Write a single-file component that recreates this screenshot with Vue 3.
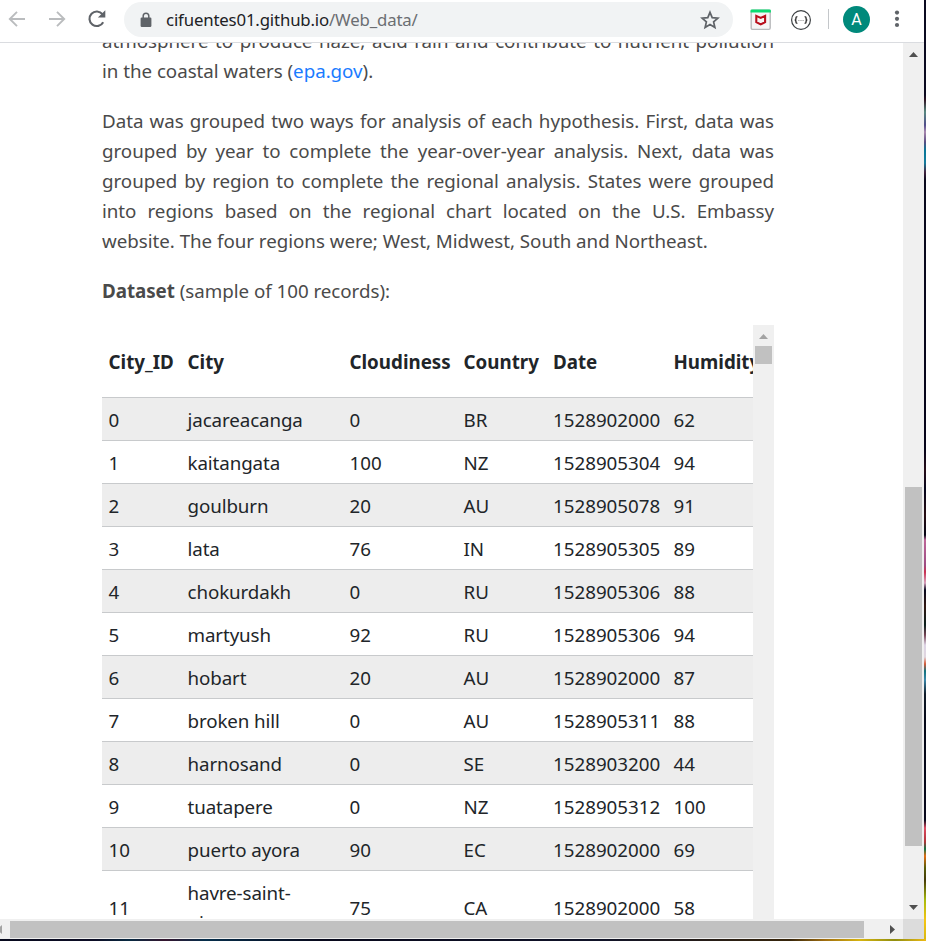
<script setup>
const columns = ['City_ID', 'City', 'Cloudiness', 'Country', 'Date', 'Humidity']
const rows = [
  ['0', 'jacareacanga', '0', 'BR', '1528902000', '62'],
  ['1', 'kaitangata', '100', 'NZ', '1528905304', '94'],
  ['2', 'goulburn', '20', 'AU', '1528905078', '91'],
  ['3', 'lata', '76', 'IN', '1528905305', '89'],
  ['4', 'chokurdakh', '0', 'RU', '1528905306', '88'],
  ['5', 'martyush', '92', 'RU', '1528905306', '94'],
  ['6', 'hobart', '20', 'AU', '1528902000', '87'],
  ['7', 'broken hill', '0', 'AU', '1528905311', '88'],
  ['8', 'harnosand', '0', 'SE', '1528903200', '44'],
  ['9', 'tuatapere', '0', 'NZ', '1528905312', '100'],
  ['10', 'puerto ayora', '90', 'EC', '1528902000', '69'],
  ['11', 'havre-saint-pierre', '75', 'CA', '1528902000', '58'],
]
</script>

<template>
  <div class="desktop">
    <div class="window">
      <header class="toolbar">
        <svg class="nav" width="18" height="18" viewBox="0 0 18 18"><path d="M17 9H2M9 1.8L1.8 9L9 16.2" fill="none" stroke="#babcbe" stroke-width="1.9" /></svg>
        <svg class="nav forward" width="18" height="18" viewBox="0 0 18 18"><path d="M1 9H16M9 1.8L16.2 9L9 16.2" fill="none" stroke="#babcbe" stroke-width="1.9" /></svg>
        <svg class="reload" width="20" height="20" viewBox="0 0 20 20"><path d="M16.2 13.2A7.3 7.3 0 1 1 15.5 5.2" fill="none" stroke="#5f6368" stroke-width="2.1" /><path d="M18.3 1.2V8.6H10.9Z" fill="#5f6368" /></svg>
        <div class="address">
          <svg class="lock" width="12" height="16" viewBox="0 0 12 16"><rect x="0.6" y="5.6" width="10.8" height="9.4" rx="1.2" fill="#5f6368" /><path d="M3.2 6V4.1a2.8 2.8 0 0 1 5.6 0V6" fill="none" stroke="#5f6368" stroke-width="1.5" /></svg>
          <span class="url">cifuentes01.github.io<span class="path">/Web_data/</span></span>
          <svg class="star" width="20" height="20" viewBox="0 0 20 20"><path d="M10 2.3L12.2 7.6L17.9 8.1L13.6 11.9L14.9 17.5L10 14.5L5.1 17.5L6.4 11.9L2.1 8.1L7.8 7.6Z" fill="none" stroke="#5f6368" stroke-width="1.7" /></svg>
        </div>
        <svg class="shield" width="22" height="22" viewBox="0 0 22 22"><rect x="1.2" y="1.2" width="19" height="19.2" rx="1.4" fill="#f5f5f5" stroke="#b8babc" stroke-width="1.4" /><path d="M0.5 3.4V1.7Q.5.6 1.6.6H19.8Q20.9.6 20.9 1.7V3.4Z" fill="#0bdc72" /><path d="M6.3 6.9L10.7 8.9L15.1 6.9V13.2L10.7 15.4L6.3 13.2Z" fill="none" stroke="#b80f1c" stroke-width="2.1" /></svg>
        <svg class="braces" width="22" height="22" viewBox="0 0 22 22"><circle cx="11" cy="11" r="9.4" fill="#fff" stroke="#3c4043" stroke-width="1.2" /><path d="M7.4 7.6Q5.9 7.6 5.9 9V10Q5.9 11 4.7 11Q5.9 11 5.9 12V13Q5.9 14.4 7.4 14.4M14.6 7.6Q16.1 7.6 16.1 9V10Q16.1 11 17.3 11Q16.1 11 16.1 12V13Q16.1 14.4 14.6 14.4" fill="none" stroke="#333" stroke-width="1.4" /><path d="M8.4 11.5h1M10.5 11.5h1M12.6 11.5h1" stroke="#888" stroke-width="1" /></svg>
        <i class="divider"></i>
        <span class="avatar">A</span>
        <svg class="dots" width="6" height="20" viewBox="0 0 6 20"><g fill="#5f6368"><circle cx="3" cy="3.6" r="2.1" /><circle cx="3" cy="9.8" r="2.1" /><circle cx="3" cy="16" r="2.1" /></g></svg>
      </header>

      <div class="viewport">
        <main class="page">
          <p class="intro">
            <span class="line full">atmosphere to produce haze, acid rain and contribute to nutrient pollution</span>
            <span class="line">in the coastal waters (<a>epa.gov</a>).</span>
          </p>
          <p>
            <span class="line full">Data was grouped two ways for analysis of each hypothesis. First, data was</span>
            <span class="line full">grouped by year to complete the year-over-year analysis. Next, data was</span>
            <span class="line full">grouped by region to complete the regional analysis. States were grouped</span>
            <span class="line full">into regions based on the regional chart located on the U.S. Embassy</span>
            <span class="line">website. The four regions were; West, Midwest, South and Northeast.</span>
          </p>
          <p class="caption"><b>Dataset</b> (sample of 100 records):</p>
          <div class="dataset">
            <div class="clip">
              <table>
                <colgroup><col class="c0" /><col class="c1" /><col class="c2" /><col class="c3" /><col class="c4" /><col class="c5" /></colgroup>
                <thead><tr><th v-for="c in columns" :key="c">{{ c }}</th></tr></thead>
                <tbody>
                  <tr v-for="row in rows" :key="row[0]">
                    <td v-for="(cell, i) in row" :key="i">{{ cell }}</td>
                  </tr>
                </tbody>
              </table>
            </div>
            <div class="bar inner">
              <svg width="21" height="21" viewBox="0 0 21 21"><path d="M6 14L10.5 9L15 14Z" fill="#a3a3a3" /></svg>
              <i class="thumb"></i>
            </div>
          </div>
        </main>
        <div class="bar outer">
          <svg width="21" height="21" viewBox="0 0 21 21"><path d="M6 14L10.5 9L15 14Z" fill="#505050" /></svg>
          <i class="thumb"></i>
          <svg class="down" width="21" height="21" viewBox="0 0 21 21"><path d="M6 7L10.5 12L15 7Z" fill="#505050" /></svg>
        </div>
      </div>

      <footer class="hbar">
        <svg width="10" height="20" viewBox="0 0 10 20"><path d="M2 6V15L-3 10.5Z" fill="#a3a3a3" /></svg>
        <i class="hthumb"></i>
        <svg class="right" width="21" height="20" viewBox="0 0 21 20"><path d="M8 6V15L13 10.5Z" fill="#505050" /></svg>
        <i class="corner"></i>
      </footer>
    </div>
    <div class="edge"></div>
    <div class="bottom"></div>
  </div>
</template>

<style>
body { margin: 0; overflow: hidden; }
</style>

<style scoped>
* { box-sizing: border-box; }
svg { display: block; flex: none; }
.desktop {
  display: grid;
  grid-template: 939px 2px / 924px 2px;
  width: 926px;
  height: 941px;
  overflow: hidden;
  font-family: "Noto Sans", "Open Sans", sans-serif;
}
.window { display: flex; flex-direction: column; min-height: 0; background: #fff; }
.edge {
  grid-column: 2;
  grid-row: 1;
  background: linear-gradient(to bottom, #0b0a20 0, #0b0a20 95px, #301524 100px, #598a81 112px, #504d8b 125px, #a988af 132px, #594d82 142px, #087697 150px, #167c9d 163px, #442540 172px, #09091d 180px, #06041a 450px, #260d18 470px, #05051c 490px, #280d12 515px, #050516 535px, #bd6698 540px, #9c4c82 565px, #c83050 572px, #d7a2bd 583px, #08091f 590px, #321711 606px, #0b211e 625px, #744353 635px, #ddd4e5 645px, #e0d7df 657px, #d55b38 664px, #12727d 671px, #3b87aa 680px, #101b28 694px, #050818 720px, #08081c 820px, #dd4b62 828px, #ad3438 842px, #107344 849px, #e46c14 856px, #565c08 868px, #453a09 880px, #a8ba0d 900px, #f4c514 920px, #d9b914 939px);
}
.bottom {
  grid-column: 1 / 3;
  background: linear-gradient(to right, #07091d 0, #0c0d25 95px, #082a42 130px, #35152e 165px, #062e4b 205px, #08091c 320px, #101328 600px, #37250b 790px, #a06e10 825px, #d7b410 860px, #908e10 895px, #edba16 926px);
}
.toolbar {
  display: flex;
  align-items: center;
  height: 43px;
  flex: none;
  padding: 0 0 4px 8px;
  border-bottom: 1px solid #dadce0;
}
.forward { margin-left: 22px; }
.reload { margin-left: 21px; }
.address {
  display: flex;
  align-items: center;
  width: 609px;
  height: 35px;
  flex: none;
  margin: 1px 0 0 17px;
  padding: 0 13px 0 16px;
  border-radius: 18px;
  background: #f1f3f4;
}
.url {
  flex: 1;
  margin-left: 14px;
  color: #202124;
  font-size: 16.8px;
  line-height: 24px;
  letter-spacing: -0.16px;
  white-space: nowrap;
}
.path { color: #6b6e72; }
.shield { margin: 1px 0 0 17px; }
.braces { margin: 1px 0 0 18px; }
.divider { flex: none; width: 1px; height: 20px; margin-left: 16px; background: #c4c7ca; }
.avatar {
  width: 27px;
  height: 27px;
  margin: 1px 0 0 14px;
  border-radius: 50%;
  background: #00897b;
  color: #fff;
  font: 16px/28px Roboto, sans-serif;
  text-align: center;
}
.dots { margin-left: 24px; }
.viewport { display: flex; height: 876px; flex: none; overflow: hidden; }
.page {
  width: 903px;
  height: 876px;
  padding-left: 102px;
  overflow: hidden;
  color: #4a4a4a;
  font-size: 18.75px;
  line-height: 30px;
}
p { width: 672px; margin: 0 0 20px; letter-spacing: -0.03px; }
.intro { margin-top: -17px; }
.line { display: block; white-space: nowrap; }
.full { text-align-last: justify; }
a { color: #1a7bff; }
.caption { margin-bottom: 19px; }
.dataset { display: flex; width: 672px; height: 620px; }
.clip { width: 651px; overflow: hidden; }
table {
  width: 780px;
  table-layout: fixed;
  border-collapse: separate;
  border-spacing: 0;
  color: #212529;
  text-align: left;
}
.c0 { width: 79px; }
.c1 { width: 162px; }
.c2 { width: 114px; }
.c3 { width: 89.5px; }
.c4 { width: 120.5px; }
.c5 { width: 215px; }
th { height: 72px; padding: 2px 6.5px 0; font-weight: 700; white-space: nowrap; }
td { padding: 7px 6px 5px 6.5px; border-top: 1px solid #c8cacc; vertical-align: middle; }
td:nth-child(2) { letter-spacing: -0.1px; }
tbody tr:nth-child(odd) { background: #ededed; }
tbody tr:last-child { background: none; }
.bar { width: 21px; flex: none; background: #f0f0f0; }
.thumb { display: block; width: 17px; margin: 0 auto; background: #c1c1c1; }
.inner .thumb { height: 18px; }
.outer { display: flex; flex-direction: column; }
.outer .thumb { height: 359px; margin-top: 423px; }
.down { margin-top: auto; }
.hbar { display: flex; align-items: center; height: 20px; flex: none; background: #f0f0f0; }
.hthumb { width: 854px; height: 17px; background: #c1c1c1; }
.right { margin-left: 18px; }
.corner { width: 21px; height: 20px; background: #dcdcdc; }
</style>
